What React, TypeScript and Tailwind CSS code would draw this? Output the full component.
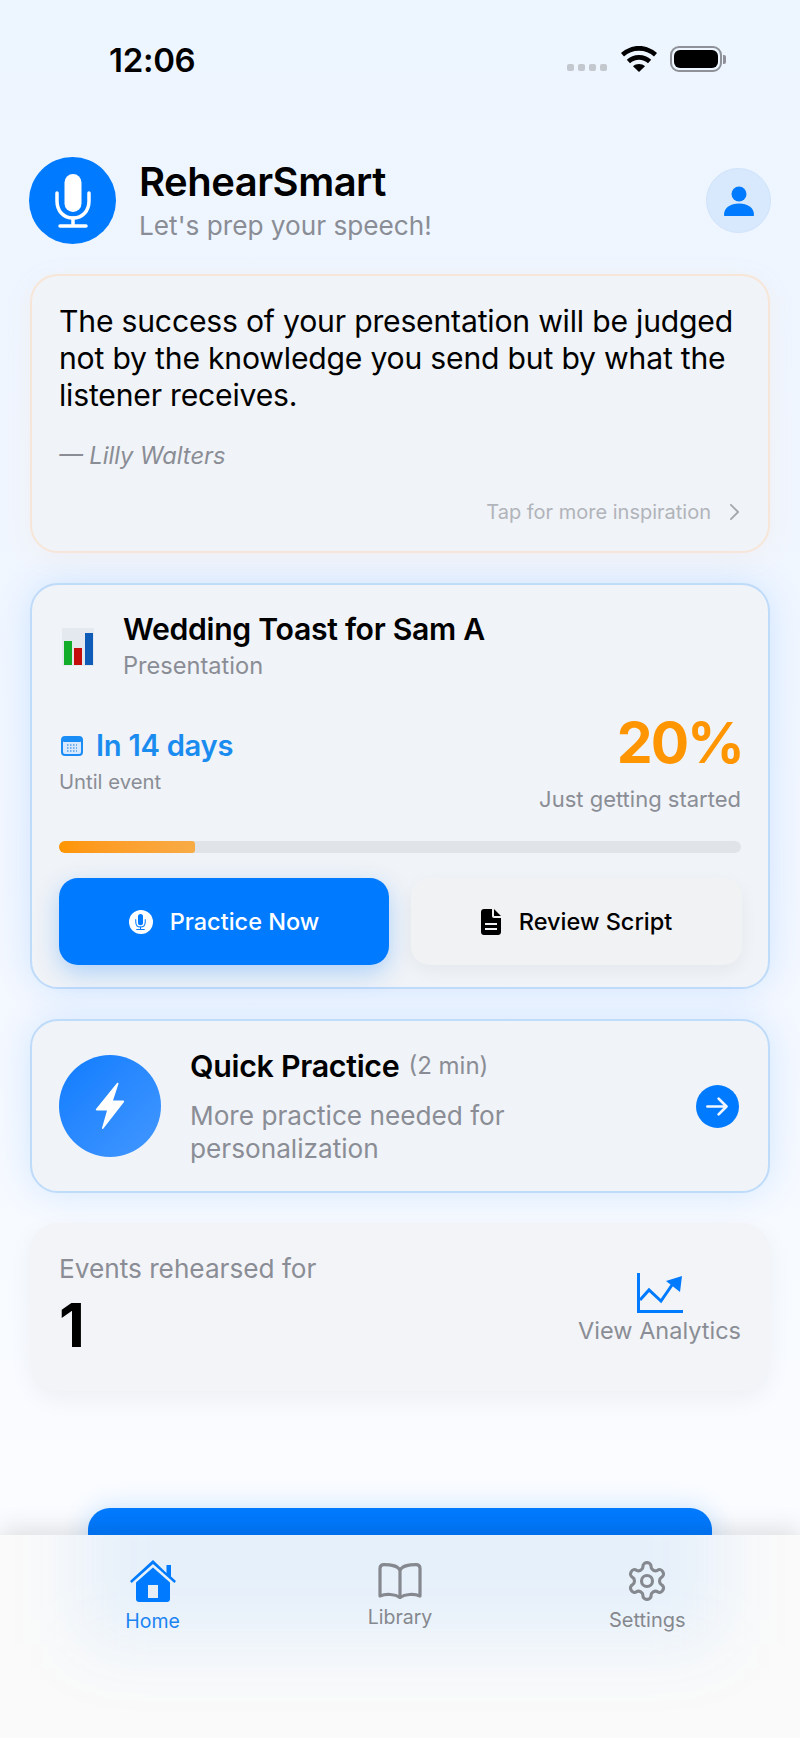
import React from "react";

const Mic = ({ className }: { className?: string }) => (
  <svg viewBox="0 0 36 54" className={className} fill="none" stroke="currentColor" strokeWidth="3.500" strokeLinecap="round">
    <rect x="9.500" y="0" width="17" height="38" rx="8.500" fill="currentColor" stroke="none" />
    <path d="M2 19v8c0 10 6.500 17 16 17s16-7 16-17v-8" />
    <path d="M18 44v8M5 52h26" />
  </svg>
);

const Card = ({ className, children }: { className: string; children: React.ReactNode }) => (
  <section className={`rounded-[28px] bg-[#f0f3f7] ${className}`}>{children}</section>
);

export default function App() {
  return (
    <div className="w-[800px] h-[1738px] flex flex-col overflow-hidden bg-gradient-to-b from-[#edf5ff] via-[#f2f7ff] to-[#fdfeff] font-['Inter','Noto_Sans',sans-serif] text-black">
      <main className="h-[1535px] shrink-0 overflow-hidden flex flex-col">
        {/* status bar */}
        <div className="h-[157px] shrink-0 pt-[41px] pl-[109px] pr-[74px] flex items-start justify-between">
          <span className="text-[33px] leading-[38px] font-semibold tracking-[-0.3px]">12:06</span>
          <div className="flex items-start pt-[5px]">
            <div className="flex gap-[4px] mt-[18px] mr-[14px]">
              <i className="block w-[7px] h-[7px] rounded-[2px] bg-[#c3c8cf]" />
              <i className="block w-[7px] h-[7px] rounded-[2px] bg-[#c3c8cf]" />
              <i className="block w-[7px] h-[7px] rounded-[2px] bg-[#c3c8cf]" />
              <i className="block w-[7px] h-[7px] rounded-[2px] bg-[#c3c8cf]" />
            </div>
            <svg viewBox="0 0 36 26" className="w-[36px] h-[26px] mr-[13px]" fill="#000">
              <path d="M18 0C11 0 5 2.7 0 7l3 3.4C7 6.8 12.2 4.8 18 4.8s11 2 15 5.6L36 7C31 2.7 25 0 18 0z" />
              <path d="M18 9c-4.7 0-9 1.8-12.2 4.8l3.2 3.5c2.4-2.2 5.5-3.5 9-3.5s6.6 1.3 9 3.5l3.2-3.5C27 10.8 22.700 9 18 9z" />
              <path d="M18 18c-2.300 0-4.400.9-6 2.300L18 26l6-5.700c-1.600-1.400-3.700-2.300-6-2.300z" />
            </svg>
            <div className="flex items-center">
              <div className="w-[52px] h-[26px] rounded-[9px] border-2 border-[#8e9197] p-[2px]">
                <div className="w-full h-full rounded-[6px] bg-black" />
              </div>
              <div className="w-[3px] h-[9px] rounded-r-[2px] bg-[#8e9197] ml-[1px]" />
            </div>
          </div>
        </div>

        {/* header */}
        <header className="h-[87px] shrink-0 pl-[29px] pr-[29px] flex items-center">
          <div className="w-[87px] h-[87px] rounded-full bg-[#007aff] flex items-center justify-center text-white">
            <Mic className="w-[36px] h-[54px]" />
          </div>
          <div className="ml-[23px] pt-[2px] flex-1">
            <h1 className="text-[40px] leading-[44px] font-semibold tracking-[-0.5px]">RehearSmart</h1>
            <p className="text-[26.200px] leading-[34px] text-[#8a8d95] mt-[5px]">Let's prep your speech!</p>
          </div>
          <div className="w-[65px] h-[65px] rounded-full bg-[#d8e9fd] border border-[#d0e3fa] flex items-center justify-center">
            <svg viewBox="0 0 32 32" className="w-[32px] h-[32px]" fill="#007aff">
              <circle cx="16" cy="9" r="7.500" />
              <path d="M1 30c0-7.500 6.500-11.500 15-11.500S31 22.500 31 30c0 .6-.4 1-1 1H2c-.6 0-1-.4-1-1z" />
            </svg>
          </div>
        </header>

        <div className="px-[30px] flex flex-col mt-[30px]">
          {/* quote */}
          <Card className="h-[279px] border-2 border-[#f7e6d8] px-[27px] pt-[27px] shadow-[0_6px_28px_rgba(255,170,90,0.08)]">
            <p className="text-[30.150px] leading-[37px] font-[430] tracking-[-0.2px]">
              The success of your presentation will be judged not by the knowledge you send but by what the listener receives.
            </p>
            <p className="mt-[27px] text-[23.700px] leading-[30px] italic text-[#8a8d95]">— Lilly Walters</p>
            <div className="mt-[28px] flex items-center justify-end text-[#b1b4ba]">
              <span className="text-[20px] leading-[26px]">Tap for more inspiration</span>
              <svg viewBox="0 0 12 20" className="w-[11px] h-[18px] ml-[18px] mr-[1px]" fill="none" stroke="#a4a7ad" strokeWidth="2" strokeLinecap="round" strokeLinejoin="round">
                <path d="M2 2l8 8-8 8" />
              </svg>
            </div>
          </Card>

          {/* event */}
          <Card className="h-[406px] mt-[30px] border-2 border-[#bedbfa] px-[27px] pt-[26px] shadow-[0_0_36px_rgba(0,122,255,0.14)]">
            <div className="flex items-start">
              <svg viewBox="0 0 32 38" className="w-[32px] h-[38px] ml-[3px] mt-[17px]">
                <rect width="32" height="38" fill="#e3e9ef" />
                <rect x="2" y="13" width="8" height="24" fill="#12ad2b" />
                <rect x="12" y="20" width="8" height="17" fill="#c40d0d" />
                <rect x="23" y="5" width="8" height="32" fill="#0f5cb8" />
              </svg>
              <div className="ml-[29px]">
                <h2 className="text-[30.200px] leading-[36px] font-semibold tracking-[-0.3px]">Wedding Toast for Sam A</h2>
                <p className="text-[23.600px] leading-[28px] mt-[5px] text-[#8a8d95]">Presentation</p>
              </div>
            </div>
            <div className="flex justify-between mt-[30px]">
              <div className="pt-[19px]">
                <div className="flex items-center">
                  <svg viewBox="0 0 22 20" className="w-[22px] h-[20px] ml-[2px]" fill="none">
                    <rect x="1" y="1" width="20" height="18" rx="3" fill="#d8e9fd" stroke="#1a8cf5" strokeWidth="2" />
                    <rect x="1" y="1" width="20" height="5" rx="2" fill="#1a8cf5" />
                    <path d="M6 9h10M6 12h10M6 15h10" stroke="#4d9ee8" strokeWidth="1.500" strokeDasharray="1.500 1.500" />
                  </svg>
                  <span className="ml-[13px] text-[29.200px] leading-[34px] font-semibold text-[#1a8cf0] tracking-[-0.3px]">In 14 days</span>
                </div>
                <p className="mt-[6px] text-[20.300px] leading-[26px] text-[#8a8d95]">Until event</p>
              </div>
              <div className="text-right">
                <p className="text-[57px] leading-[66px] font-bold text-[#ff9500] tracking-[-2px] mr-[-2px]">20%</p>
                <p className="text-[22px] leading-[28px] mt-[9px] text-[#8a8d95]">Just getting started</p>
              </div>
            </div>
            <div className="mt-[28px] h-[12px] rounded-full bg-[#e0e3e7] overflow-hidden">
              <div className="h-full w-[20%] rounded-r-[3px] bg-gradient-to-r from-[#ff9500] to-[#f8ab45]" />
            </div>
            <div className="mt-[25px] flex gap-[22px] mr-[-1px]">
              <button className="w-[330px] shrink-0 h-[87px] rounded-[19px] bg-[#007aff] text-white flex items-center justify-center gap-[17px] shadow-[0_8px_24px_rgba(0,122,255,0.28)]">
                <span className="w-[24px] h-[24px] rounded-full bg-white flex items-center justify-center text-[#007aff]">
                  <Mic className="w-[11px] h-[16px]" />
                </span>
                <span className="text-[23.500px] font-medium">Practice Now</span>
              </button>
              <button className="flex-1 h-[87px] rounded-[19px] bg-[#f1f2f4] flex items-center justify-center gap-[18px] shadow-[0_6px_18px_rgba(0,0,0,0.05)]">
                <svg viewBox="0 0 20 26" className="w-[20px] h-[26px]" fill="#000">
                  <path fillRule="evenodd" d="M3 0h8v7c0 1 .8 2 2 2h7v14c0 1.700-1.300 3-3 3H3c-1.700 0-3-1.300-3-3V3c0-1.700 1.300-3 3-3zm10 0l7 7h-7V0zM4 14v2h12v-2H4zm0 5v2h12v-2H4z" />
                </svg>
                <span className="text-[23.500px] font-medium">Review Script</span>
              </button>
            </div>
          </Card>

          {/* quick practice */}
          <Card className="h-[174px] mt-[30px] border-2 border-[#bedbfa] pl-[27px] pr-[29px] flex items-center shadow-[0_0_36px_rgba(0,122,255,0.14)]">
            <div className="w-[102px] h-[102px] shrink-0 rounded-full bg-gradient-to-br from-[#0a7cff] to-[#4197ff] flex items-center justify-center">
              <svg viewBox="0 0 32 48" className="w-[32px] h-[48px]" fill="#fff">
                <path d="M23 1L2 27c-.5.7 0 1.500.8 1.500H13L8 46c-.2.8.6 1.300 1.200.7L30 20c.5-.7 0-1.500-.8-1.500H19l5.500-16.700C24.800 1 23.600.4 23 1z" />
              </svg>
            </div>
            <div className="ml-[29px] flex-1">
              <p className="flex items-center">
                <span className="text-[30.400px] leading-[36px] font-semibold tracking-[-0.3px]">Quick Practice</span>
                <span className="ml-[9px] text-[24px] leading-[30px] text-[#8a8d95]">(2 min)</span>
              </p>
              <p className="mt-[15px] text-[26.200px] leading-[33px] text-[#8a8d95] w-[400px]">More practice needed for personalization</p>
            </div>
            <div className="w-[43px] h-[43px] rounded-full bg-[#007aff] flex items-center justify-center">
              <svg viewBox="0 0 24 24" className="w-[27px] h-[27px]" fill="none" stroke="#f2f7ff" strokeWidth="2.400" strokeLinecap="round" strokeLinejoin="round">
                <path d="M3 12h17M13 5l7 7-7 7" />
              </svg>
            </div>
          </Card>

          {/* events */}
          <Card className="h-[168px] mt-[30px] bg-[#f3f4f7] pl-[29px] pr-[29px] flex justify-between shadow-[0_8px_24px_rgba(0,0,0,0.05)]">
            <div className="pt-[29px]">
              <p className="text-[26.200px] leading-[34px] text-[#8a8d95]">Events rehearsed for</p>
              <p className="mt-[3px] text-[60px] leading-[72px] font-bold">1</p>
            </div>
            <div className="pt-[50px] flex flex-col items-center">
              <svg viewBox="0 0 46 40" className="w-[46px] h-[40px]" fill="none" stroke="#007aff" strokeWidth="3">
                <path d="M1.500 0v38.500H46" />
                <path d="M3 27l9-10 12 11 11-16" />
                <path d="M29 8l16-5-2 16z" fill="#007aff" stroke="none" />
              </svg>
              <p className="mt-[3px] text-[23.500px] leading-[30px] text-[#8a8d95]">View Analytics</p>
            </div>
          </Card>

          {/* big button, cut by the tab bar */}
          <div className="mx-[58px] mt-[117px] h-[60px] rounded-[22px] bg-[#007aff] shadow-[0_0_26px_rgba(0,122,255,0.2)]" />
        </div>
      </main>

      {/* tab bar */}
      <nav className="relative flex-1 overflow-hidden bg-[#fafafa] shadow-[0_-6px_24px_rgba(0,0,0,0.12)] px-[29px] grid grid-cols-3 items-start">
        <div className="absolute left-[80px] right-[80px] top-[-60px] h-[170px] bg-[#007aff]/8 blur-[36px]" />
        <div className="relative flex flex-col items-center pt-[25px]">
          <svg viewBox="0 0 46 42" className="w-[46px] h-[42px]" fill="#007aff">
            <path d="M23 0L0 21l1.600 2L23 4l21.400 19 1.600-2-5-4.500V5h-4.500v8z" />
            <path fillRule="evenodd" d="M23 7.500L6 22.500V39c0 1.700 1.300 3 3 3h28c1.700 0 3-1.300 3-3V22.500z" />
            <rect x="18" y="25" width="10" height="13" fill="#e8eef6" />
          </svg>
          <span className="mt-[6px] text-[19.500px] leading-[26px] text-[#1a84f3]">Home</span>
        </div>
        <div className="relative flex flex-col items-center pt-[28px]">
          <svg viewBox="0 0 44 36" className="w-[44px] h-[36px]" fill="none" stroke="#85888e" strokeWidth="3.200" strokeLinecap="round" strokeLinejoin="round">
            <path d="M22 7C19 2 13 1.600 6 1.600 3.500 1.600 2 3 2 5.500V33c6-2.500 15-2 20 1.500 5-3.500 14-4 20-1.500V5.500c0-2.500-1.500-3.900-4-3.900C31 1.600 25 2 22 7z" />
            <path d="M22 7v27" />
          </svg>
          <span className="mt-[5px] text-[19.500px] leading-[26px] text-[#85888e]">Library</span>
        </div>
        <div className="relative flex flex-col items-center pt-[24px]">
          <svg viewBox="0 0 24 24" className="w-[44px] h-[44px]" fill="none" stroke="#85888e" strokeWidth="1.700" strokeLinecap="round" strokeLinejoin="round">
            <path d="M12.220 2h-.44a2 2 0 0 0-2 2v.18a2 2 0 0 1-1 1.730l-.43.25a2 2 0 0 1-2 0l-.15-.08a2 2 0 0 0-2.730.73l-.22.380a2 2 0 0 0 .730 2.730l.150.100a2 2 0 0 1 1 1.720v.510a2 2 0 0 1-1 1.740l-.150.090a2 2 0 0 0-.730 2.730l.220.380a2 2 0 0 0 2.730.730l.150-.080a2 2 0 0 1 2 0l.430.250a2 2 0 0 1 1 1.730V20a2 2 0 0 0 2 2h.440a2 2 0 0 0 2-2v-.180a2 2 0 0 1 1-1.730l.430-.250a2 2 0 0 1 2 0l.150.080a2 2 0 0 0 2.730-.730l.220-.390a2 2 0 0 0-.730-2.730l-.150-.080a2 2 0 0 1-1-1.740v-.500a2 2 0 0 1 1-1.740l.150-.090a2 2 0 0 0 .730-2.730l-.220-.380a2 2 0 0 0-2.730-.730l-.150.080a2 2 0 0 1-2 0l-.430-.250a2 2 0 0 1-1-1.730V4a2 2 0 0 0-2-2z" />
            <circle cx="12" cy="12" r="3" />
          </svg>
          <span className="mt-[4px] text-[20px] leading-[26px] text-[#85888e]">Settings</span>
        </div>
      </nav>
    </div>
  );
}
